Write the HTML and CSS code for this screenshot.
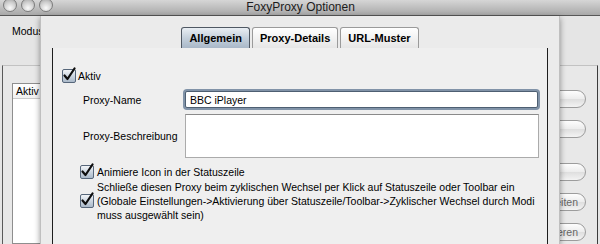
FILE: index.html
```html
<!DOCTYPE html>
<html>

<head>
    <title>FoxyProxy Optionen</title>
    <link rel="stylesheet" href="styles.css">
</head>

<body>
    <div class="window">
        <div class="titlebar">
            <div class="lights">
                <span class="light"></span>
                <span class="light"></span>
                <span class="light"></span>
            </div>
            <div class="title">FoxyProxy Optionen</div>
        </div>

        <div class="window-body">
            <div class="mode-row">Modus</div>

            <div class="proxy-box">
                <div class="proxy-list">
                    <div class="list-head">Aktiv</div>
                </div>
                <div class="side-buttons">
                    <button class="pill covered">Nach oben</button>
                    <button class="pill covered">Nach unten</button>
                    <button class="pill covered gap">Neu</button>
                    <button class="pill">Bearbeiten</button>
                    <button class="pill">Kopieren</button>
                </div>
            </div>

            <!-- the edit sheet sits over the main window -->
            <div class="sheet">
                <div class="tabs">
                    <div class="tab selected">Allgemein</div>
                    <div class="tab">Proxy-Details</div>
                    <div class="tab">URL-Muster</div>
                </div>

                <div class="tab-panel">
                    <label class="check-row first">
                        <span class="check"><svg viewBox="0 0 14 16" width="14" height="16"><path d="M2.5 8.5 L5.5 12 L12.5 1.5" /></svg></span>
                        <span>Aktiv</span>
                    </label>

                    <div class="field-row">
                        <span class="field-label">Proxy-Name</span>
                        <input type="text" class="text-input focused" value="BBC iPlayer">
                    </div>

                    <div class="field-row">
                        <span class="field-label">Proxy-Beschreibung</span>
                        <textarea class="text-area"></textarea>
                    </div>

                    <label class="check-row">
                        <span class="check"><svg viewBox="0 0 14 16" width="14" height="16"><path d="M2.5 8.5 L5.5 12 L12.5 1.5" /></svg></span>
                        <span>Animiere Icon in der Statuszeile</span>
                    </label>

                    <label class="check-row">
                        <span class="check"><svg viewBox="0 0 14 16" width="14" height="16"><path d="M2.5 8.5 L5.5 12 L12.5 1.5" /></svg></span>
                        <span class="multi">Schließe diesen Proxy beim zyklischen Wechsel per Klick auf Statuszeile oder Toolbar ein<br>(Globale Einstellungen-&gt;Aktivierung über Statuszeile/Toolbar-&gt;Zyklischer Wechsel durch Modi<br>muss ausgewählt sein)</span>
                    </label>
                </div>
            </div>
        </div>
    </div>
</body>

</html>
```

FILE: styles.css
```css
body {
    margin: 0;
    font-family: 'Liberation Sans', Arial, sans-serif;
    font-size: 10.5px;
    color: #000;
    background: #e5e5e5;
}

.window {
    width: 600px;
    height: 244px;
    overflow: hidden;
    display: flex;
    flex-direction: column;
}

.titlebar {
    height: 15px;
    border-bottom: 1px solid #575757;
    background: linear-gradient(#d6d6d6, #a8a8a8);
    display: flex;
    align-items: center;
}

.lights {
    display: flex;
    gap: 4px;
    margin: -5px 0 0 3px;
}

.light {
    width: 12px;
    height: 12px;
    border-radius: 50%;
    border: 1px solid #7c7c7c;
    background: radial-gradient(circle at 50% 75%, #fafafa, #cdcdcd 55%, #9c9c9c);
}

.title {
    flex: 1;
    text-align: center;
    margin-left: -52px;
    font-size: 12px;
    line-height: 15px;
    color: #1c1c1c;
}

.window-body {
    flex: 1;
    display: flex;
    flex-direction: column;
    position: relative;
    background: #e5e5e5;
}

.mode-row {
    margin: 8px 0 0 12px;
    line-height: 14px;
}

.proxy-box {
    flex: 1;
    margin: 27px 2px 0 2px;
    padding: 17px 11px 0 9px;
    border-top: 1px solid #c2c2c2;
    border-left: 1px solid #5a5a5a;
    border-right: 1px solid #3c3c3c;
    background: #e8e8e8;
    display: flex;
    justify-content: space-between;
}

.proxy-list {
    width: 200px;
    background: #fff;
    border: 1px solid #8e8e8e;
}

.list-head {
    line-height: 14px;
    padding-left: 3px;
    border-bottom: 1px solid #cacaca;
    background: linear-gradient(#fff, #f1f1f1);
}

.side-buttons {
    display: flex;
    flex-direction: column;
    gap: 12px;
    padding-top: 7px;
}

.pill {
    width: 100px;
    height: 18px;
    padding: 0 7px 0 0;
    border: 1px solid #9c9c9c;
    border-radius: 9px;
    background: linear-gradient(#fdfdfd, #ececec 50%, #dedede 51%, #f3f3f3);
    font-family: inherit;
    font-size: 10.5px;
    color: #666;
    text-align: right;
}

.pill.covered {
    padding-right: 34px;
}

.pill.gap {
    margin-top: 13px;
}

.sheet {
    position: absolute;
    top: 0;
    left: 40px;
    bottom: 0;
    width: 518px;
    border-left: 1px solid #bfbfbf;
    border-right: 1px solid #bfbfbf;
    background: #ebebeb;
    box-shadow: 0 2px 6px rgba(0, 0, 0, 0.4);
    display: flex;
    flex-direction: column;
}

.tabs {
    display: flex;
    justify-content: center;
    gap: 2px;
    padding-top: 11px;
}

.tab {
    height: 20px;
    line-height: 20px;
    padding: 0 7px;
    font-weight: bold;
    font-size: 11px;
    border: 1px solid #9a9a9a;
    border-bottom: none;
    border-radius: 3px 3px 0 0;
    background: linear-gradient(#ffffff, #f2f2f2 50%, #e6e6e6);
}

.tab.selected {
    border-color: #4f5863;
    background: linear-gradient(#e9eef3, #c4d0dc 50%, #a9b8c8);
}

.tab-panel {
    flex: 1;
    margin: 0 11px;
    padding: 20px 0 0 9px;
    border-left: 1px solid #1e1e1e;
    border-right: 1px solid #1e1e1e;
    background: #efefef;
}

.check-row {
    display: flex;
    align-items: center;
    gap: 3px;
    min-height: 16px;
    margin-left: 18px;
    line-height: 14px;
}

.check-row.first {
    margin-left: 0;
    gap: 2px;
}

.check {
    width: 12px;
    height: 12px;
    border: 1px solid #56667a;
    border-radius: 2px;
    background: linear-gradient(#f2f5f8, #c9d3de 55%, #aab9c9);
    position: relative;
    flex-shrink: 0;
}

.check svg {
    position: absolute;
    left: -1px;
    top: -3px;
}

.check path {
    fill: none;
    stroke: #0e0e0e;
    stroke-width: 2.2;
    stroke-linecap: round;
    stroke-linejoin: round;
}

.field-row {
    display: flex;
    align-items: center;
    margin: 7px 0 6px 21px;
}

.field-row + .field-row {
    margin-top: 0;
}

.field-label {
    width: 102px;
    flex-shrink: 0;
}

.text-input {
    width: 353px;
    height: 17px;
    box-sizing: border-box;
    padding: 0 4px;
    margin: 0;
    font-family: inherit;
    font-size: 10.5px;
    color: #000;
    background: #fff;
    border: 1px solid #4e5f72;
    border-radius: 2px;
    box-shadow: 0 0 0 2px #8193a8;
    outline: none;
}

.text-area {
    width: 354px;
    height: 44px;
    box-sizing: border-box;
    margin: 0;
    resize: none;
    background: #fff;
    border: 1px solid #ababab;
    border-top-color: #8a8a8a;
}

.multi {
    white-space: nowrap;
}
```
